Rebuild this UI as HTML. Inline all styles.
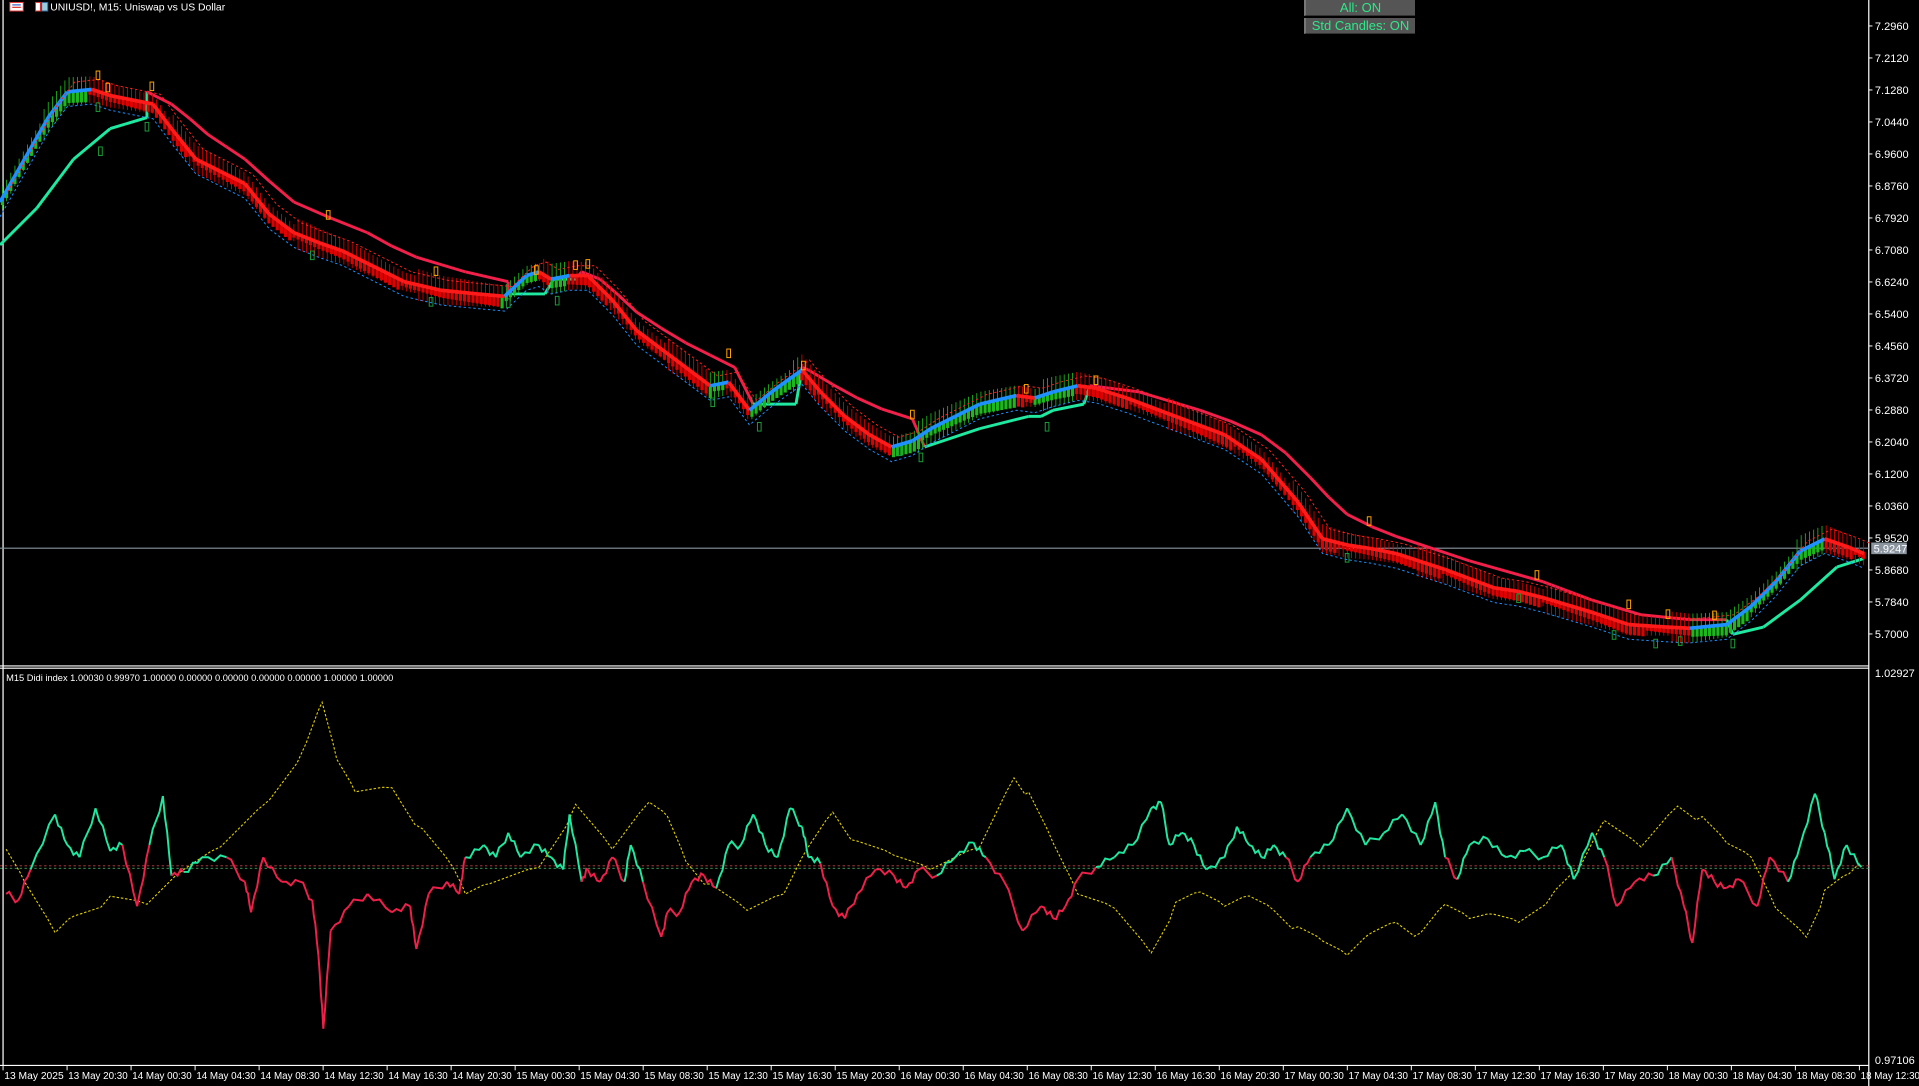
<!DOCTYPE html>
<html><head><meta charset="utf-8">
<style>
html,body{margin:0;padding:0;background:#000;width:1919px;height:1086px;overflow:hidden}
svg{position:absolute;left:0;top:0}
.btn{position:absolute;left:1304px;width:111px;height:16px;background:#555;color:#2ee88a;font:13px "Liberation Sans",sans-serif;text-align:center;line-height:16px;border-left:2px solid #777;border-bottom:1px solid #333;box-sizing:border-box}
</style></head><body>
<svg id="s" width="1919" height="1086" viewBox="0 0 1567 886.8" preserveAspectRatio="none" font-family="Liberation Sans, sans-serif"></svg>
<div class="btn" style="top:0">All: ON</div>
<div class="btn" style="top:18px">Std Candles: ON</div>
<script>
var s=document.getElementById('s'),h='';
function P(a){return a.map(p=>p[0]+','+p[1]).join(' ');}
function pl(a,c,w,d){h+='<polyline fill="none" stroke="'+c+'" stroke-width="'+w+'"'+(d?' stroke-dasharray="'+d+'"':'')+' points="'+P(a)+'"/>';}
function interp(a,x){for(var i=1;i<a.length;i++){if(x<=a[i][0]){var t=(x-a[i-1][0])/(a[i][0]-a[i-1][0]);return a[i-1][1]+t*(a[i][1]-a[i-1][1]);}}return a[a.length-1][1];}
h+='<line x1="2.5" y1="0" x2="2.5" y2="870" stroke="#fff" stroke-width="1"/>';
h+='<line x1="1526" y1="0" x2="1526" y2="887" stroke="#fff" stroke-width="1"/>';
h+='<line x1="0" y1="543.8" x2="1526" y2="543.8" stroke="#fff" stroke-width="0.9"/>';
h+='<line x1="0" y1="545.6" x2="1526" y2="545.6" stroke="#fff" stroke-width="0.9"/>';
h+='<line x1="0" y1="870" x2="1526" y2="870" stroke="#fff" stroke-width="0.9"/>';
var pr=['7.2960','7.2120','7.1280','7.0440','6.9600','6.8760','6.7920','6.7080','6.6240','6.5400','6.4560','6.3720','6.2880','6.2040','6.1200','6.0360','5.9520','5.8680','5.7840','5.7000'];
pr.forEach(function(t,i){var y=21.2+i*26.13;h+='<line x1="1526" y1="'+y+'" x2="1529" y2="'+y+'" stroke="#fff" stroke-width="0.8"/><text x="1531" y="'+(y+3.3)+'" fill="#fff" font-size="9">'+t+'</text>';});
h+='<line x1="0" y1="447.6" x2="1526" y2="447.6" stroke="#8a95a0" stroke-width="0.9"/>';
h+='<rect x="1528" y="443" width="29" height="9.5" fill="#8a95a0"/><text x="1530" y="451" fill="#fff" font-size="9">5.9247</text>';
h+='<text x="1531" y="553" fill="#fff" font-size="9">1.02927</text><text x="1531" y="869" fill="#fff" font-size="9">0.97106</text>';
var d=['13 May 2025','13 May 20:30'];['14','15','16','17'].forEach(function(dd){['00:30','04:30','08:30','12:30','16:30','20:30'].forEach(function(t){d.push(dd+' May '+t);});});
['00:30','04:30','08:30','12:30'].forEach(function(t){d.push('18 May '+t);});
d.forEach(function(t,i){var x=2.5+i*52.27;h+='<line x1="'+x+'" y1="870" x2="'+x+'" y2="874" stroke="#fff" stroke-width="0.8"/><text x="'+(x+1)+'" y="881" fill="#fff" font-size="8.4" textLength="48.5" lengthAdjust="spacingAndGlyphs">'+t+'</text>';});
h+='<rect x="8" y="2" width="11" height="7" fill="#fff" stroke="#d33" stroke-width="0.8"/><line x1="10" y1="4" x2="17" y2="4" stroke="#36c"/><line x1="10" y1="6" x2="17" y2="6" stroke="#d33"/>';
h+='<rect x="29" y="2" width="4" height="7" fill="#fff" stroke="#d33" stroke-width="0.8"/><rect x="34" y="2" width="5" height="7" fill="#9cd" stroke="#369" stroke-width="0.8"/>';
h+='<text x="41" y="8.5" fill="#fff" font-size="8.5">UNIUSD!, M15:  Uniswap vs US Dollar</text>';
h+='<text x="5" y="556" fill="#fff" font-size="7.6">M15 Didi index 1.00030 0.99970 1.00000 0.00000 0.00000 0.00000 0.00000 1.00000 1.00000</text>';
var pp=[[0,165],[20,130],[40,95],[55,75],[75,73],[90,78],[110,82],[125,85],[140,105],[160,130],[180,140],[200,150],[220,175],[240,190],[260,198],[280,205],[300,215],[330,230],[360,237],[390,240],[412,242],[430,225],[440,222],[450,228],[465,225],[480,225],[500,245],[520,270],[540,285],[560,300],[580,315],[595,312],[612,335],[630,320],[655,302],[670,320],[690,340],[710,355],[728,365],[745,360],[760,350],[780,340],[800,330],[830,323],[845,325],[860,320],[880,315],[895,317],[920,325],[960,340],[1000,355],[1030,375],[1060,410],[1080,440],[1100,445],[1120,448],[1140,452],[1180,465],[1220,480],[1240,483],[1260,488],[1300,500],[1330,510],[1360,512],[1380,513],[1410,510],[1430,495],[1450,475],[1470,450],[1490,440],[1510,447],[1522,452]];
var sl=[[0,200],[30,170],[60,130],[90,105],[120,96],[120,75],[140,85],[155,97],[170,110],[185,120],[200,130],[220,148],[240,165],[270,178],[300,190],[320,201],[340,210],[380,222],[415,230],[415,240],[445,240],[452,228],[470,228],[475,222],[490,228],[505,241],[520,255],[540,268],[560,280],[580,290],[600,300],[615,330],[650,330],[655,300],[660,302],[680,314],[700,325],[720,334],[745,342],[755,365],[800,350],[840,340],[850,340],[860,335],[885,330],[890,315],[930,320],[980,335],[1005,344],[1030,355],[1050,370],[1070,390],[1085,406],[1100,420],[1120,430],[1140,438],[1200,458],[1260,475],[1300,490],[1340,502],[1380,506],[1410,506],[1415,518],[1440,512],[1470,490],[1500,463],[1522,456]];
for(var i=1;i<sl.length;i++){var a=sl[i-1],b=sl[i];var up=interp(pp,(a[0]+b[0])/2)<(a[1]+b[1])/2;pl([a,b],up?'#1fe8a0':'#f0204a',2.4);}
for(var x=2;x<1522;x+=3.4){var y=interp(pp,x),y2=interp(pp,x+3.4);var up=y2<y-0.2;var c=up?'#1db81d':'#e00000';var r=7+((x*7)%6);
h+='<line x1="'+x+'" y1="'+(y-r)+'" x2="'+x+'" y2="'+(y+r)+'" stroke="'+c+'" stroke-width="0.7"/>';
h+='<rect x="'+(x-1.3)+'" y="'+(up?y:y-1)+'" width="2.6" height="'+(5+((x*3)%5))+'" fill="'+c+'"/>';}
for(var i=1;i<pp.length;i++){var a=pp[i-1],b=pp[i];var up=b[1]<a[1];pl([a,b],up?'#1e90ff':'#ff1a1a',3);}
pl(pp.map(p=>[p[0],p[1]+12]),'#1e90ff',0.8,'2,2');
pl(pp.map(p=>[p[0]+6,p[1]-8]),'#ff2020',0.8,'2,2');
[[80,58],[88,68],[124,67],[268,172],[356,218],[438,217],[470,213],[480,212],[595,285],[656,295],[745,335],[838,314],[895,307],[1118,422],[1255,466],[1330,490],[1362,498],[1400,499]].forEach(function(p){h+='<rect x="'+(p[0]-1.5)+'" y="'+p[1]+'" width="3" height="7" fill="none" stroke="#ffa500" stroke-width="0.8"/>';});
[[80,84],[120,100],[82,120],[255,205],[352,243],[415,244],[455,242],[582,325],[620,345],[735,365],[752,370],[855,345],[1100,452],[1240,485],[1318,515],[1352,522],[1372,520],[1415,522]].forEach(function(p){h+='<rect x="'+(p[0]-1.5)+'" y="'+p[1]+'" width="3" height="7" fill="none" stroke="#1a9e3a" stroke-width="0.8"/>';});
h+='<line x1="0" y1="707" x2="1526" y2="707" stroke="#c04040" stroke-width="0.7" stroke-dasharray="2,2"/>';
h+='<line x1="0" y1="709" x2="1526" y2="709" stroke="#40a060" stroke-width="0.7" stroke-dasharray="2,2"/>';
var yl=[[5,695],[20,720],[45,760],[60,745],[90,735],[120,740],[150,710],[180,690],[220,650],[250,610],[263,575],[275,620],[290,645],[320,640],[345,680],[370,710],[380,730],[400,720],[440,705],[470,660],[500,695],[530,655],[545,665],[560,700],[580,725],[610,745],[640,730],[660,690],[680,660],[700,690],[730,700],[760,710],[800,690],[828,632],[840,650],[860,690],[880,730],[910,740],[940,775],[960,740],[980,730],[1000,740],[1020,730],[1040,740],[1060,760],[1080,770],[1100,780],[1120,760],[1140,750],[1160,765],[1180,740],[1200,750],[1220,745],[1240,750],[1270,730],[1290,710],[1310,670],[1340,690],[1370,655],[1390,670],[1410,690],[1430,700],[1450,740],[1475,762],[1490,730],[1510,715],[1520,705]];
var yl2=[];for(var i=1;i<yl.length;i++){var a=yl[i-1],b=yl[i];for(var k=0;k<4;k++){var t=k/4;yl2.push([a[0]+(b[0]-a[0])*t,a[1]+(b[1]-a[1])*t+(((i*11+k*5)%5)-2)*1.6]);}}yl2.push(yl[yl.length-1]);
pl(yl2,'#e0d000',0.9,'2,1.5');
var ip=[[5,730],[15,735],[25,710],[45,665],[55,690],[65,700],[78,660],[90,695],[100,690],[112,740],[122,690],[133,650],[140,715],[150,712],[165,700],[185,700],[200,720],[205,745],[215,700],[230,720],[245,720],[255,735],[260,780],[264,840],[270,760],[285,740],[300,730],[320,745],[335,740],[340,775],[350,730],[365,720],[375,730],[380,700],[395,690],[405,700],[415,680],[425,700],[440,690],[450,700],[460,710],[465,665],[475,720],[480,710],[490,720],[500,700],[510,720],[515,690],[525,720],[540,765],[545,745],[555,745],[565,720],[575,715],[585,725],[595,690],[605,690],[615,665],[625,690],[635,700],[645,660],[655,675],[660,700],[670,705],[680,740],[690,750],[700,730],[715,710],[730,715],[740,725],[750,710],[765,715],[780,700],[795,688],[805,700],[820,720],[835,760],[850,740],[860,750],[870,740],[880,718],[895,708],[910,700],[925,690],[940,660],[948,655],[955,690],[965,680],[975,690],[985,710],[1000,700],[1010,675],[1020,690],[1030,700],[1040,690],[1050,700],[1060,720],[1070,700],[1085,690],[1100,660],[1115,690],[1130,680],[1145,665],[1160,690],[1172,655],[1180,700],[1190,718],[1200,690],[1215,685],[1230,700],[1245,695],[1260,700],[1275,690],[1285,718],[1300,680],[1310,700],[1320,740],[1335,720],[1350,715],[1365,700],[1375,740],[1382,770],[1390,710],[1400,720],[1410,725],[1420,718],[1435,740],[1445,700],[1460,720],[1470,690],[1482,648],[1490,680],[1498,718],[1508,690],[1520,708]];
for(var i=1;i<ip.length;i++){var a=ip[i-1],b=ip[i];var pts=[a];for(var k=1;k<4;k++){var t=k/4;pts.push([a[0]+(b[0]-a[0])*t,a[1]+(b[1]-a[1])*t+(((i*13+k*7)%5)-2)*1.5]);}pts.push(b);
var up=(a[1]+b[1])/2<708;pl(pts,up?'#1fe8a0':'#f0204a',1.6);}
s.innerHTML=h;
</script>
</body></html>
